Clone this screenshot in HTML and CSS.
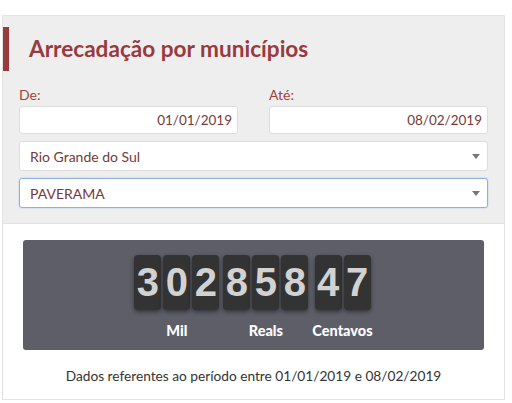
FILE: index.html
```html
<!DOCTYPE html>
<html>
<head>
	<title>Arrecadação por municípios</title>
	<meta charset="UTF-8">
	<meta name="viewport" content="width=device-width, initial-scale=1.0">
	<link rel="stylesheet" href="styles.css">
</head>
<body>
	<div class="wrap">
		<div class="filters">
			<h2 class="title">Arrecadação por municípios</h2>
			<div class="dates">
				<div class="field">
					<label for="de">De:</label>
					<input type="text" id="de" value="01/01/2019">
				</div>
				<div class="field">
					<label for="ate">Até:</label>
					<input type="text" id="ate" value="08/02/2019">
				</div>
			</div>
			<div class="select-box">
				<select id="estado">
					<option>Rio Grande do Sul</option>
				</select>
			</div>
			<div class="select-box focus">
				<select id="municipio">
					<option>PAVERAMA</option>
				</select>
			</div>
		</div>

		<div class="result">
			<div class="counter">
				<div class="group">
					<div class="digits">
						<span class="digit">3</span><span class="digit">0</span><span class="digit">2</span>
					</div>
					<div class="unit">Mil</div>
				</div>
				<div class="group">
					<div class="digits">
						<span class="digit">8</span><span class="digit">5</span><span class="digit">8</span>
					</div>
					<div class="unit">Reals</div>
				</div>
				<div class="group">
					<div class="digits">
						<span class="digit">4</span><span class="digit">7</span>
					</div>
					<div class="unit">Centavos</div>
				</div>
			</div>
			<p class="note">Dados referentes ao período entre 01/01/2019 e 08/02/2019</p>
		</div>
	</div>
</body>
</html>
```

FILE: styles.css
```css
body {
	margin: 0;
	background-color: #fff;
	font-family: Lato, "Open Sans", sans-serif;
}

.wrap {
	width: 503px;
	margin: 15px 0 0 2px;
}

.filters {
	background-color: #eee;
	border: 1px solid #e2e2e2;
	padding: 11px 16px 15px 0;
}

.title {
	margin: 0 0 14px 0;
	border-left: 6px solid #993a3f;
	padding-left: 20px;
	height: 44px;
	line-height: 44px;
	font-size: 22.6px;
	font-weight: bold;
	color: #993a3e;
}

.dates {
	display: flex;
	gap: 31px;
	padding-left: 16px;
}

.field {
	flex: 1;
}

label {
	display: block;
	font-size: 14px;
	line-height: 20px;
	margin-bottom: 1px;
	color: #a0443f;
}

input[type="text"] {
	display: block;
	width: 100%;
	height: 28px;
	box-sizing: border-box;
	border: 1px solid #ddd;
	border-radius: 3px;
	padding: 0 5px;
	background: #fff;
	text-align: right;
	font-family: Lato, sans-serif;
	font-size: 13.5px;
	color: #75393a;
	outline: none;
}

.select-box {
	position: relative;
	margin: 7px 0 0 16px;
}

.select-box select {
	display: block;
	width: 100%;
	height: 30px;
	box-sizing: border-box;
	border: 1px solid #ddd;
	border-radius: 3px;
	padding: 0 10px;
	background: #fff;
	appearance: none;
	-webkit-appearance: none;
	font-family: Lato, sans-serif;
	font-size: 14px;
	color: #75393a;
	outline: none;
}

.select-box::after {
	content: "";
	position: absolute;
	right: 8px;
	top: 13px;
	border-left: 4px solid transparent;
	border-right: 4px solid transparent;
	border-top: 5px solid #777;
}

.focus select {
	border-color: #8db0e4;
	box-shadow: 0 0 2px rgba(100, 150, 230, 0.4);
}

.result {
	border: 1px solid #e2e2e2;
	border-top: none;
	padding: 16px 20px 13px 20px;
}

.counter {
	display: flex;
	justify-content: center;
	gap: 4px;
	background-color: #5e5e69;
	border-radius: 3px;
	padding: 15px 0 9px 0;
}

.group {
	display: flex;
	flex-direction: column;
	align-items: center;
}

.digits {
	display: flex;
	gap: 2px;
}

.digit {
	width: 27px;
	height: 55px;
	line-height: 55px;
	background-color: #333;
	border-radius: 4px;
	box-shadow: 0 2px 4px rgba(0, 0, 0, 0.45);
	text-align: center;
	font-family: "Liberation Sans", Arial, sans-serif;
	font-weight: bold;
	font-size: 40px;
	color: #d2d2d2;
}

.unit {
	margin-top: 11px;
	font-size: 14.5px;
	line-height: 20px;
	font-weight: 900;
	color: #fff;
}

.note {
	margin: 16px 0 0 0;
	text-align: center;
	font-size: 13.7px;
	line-height: 20px;
	color: #333;
}
```
